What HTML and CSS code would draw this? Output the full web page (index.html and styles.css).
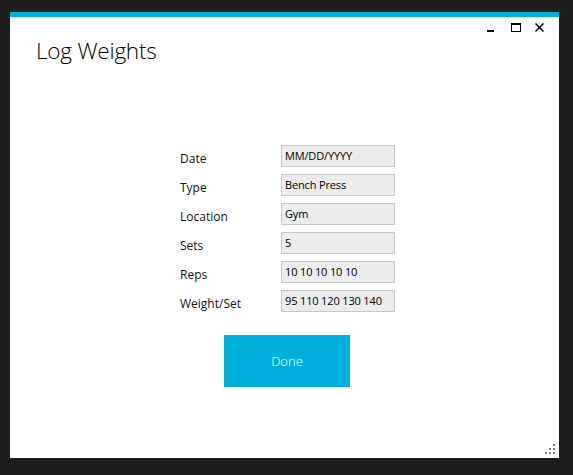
FILE: index.html
```html
<!DOCTYPE html>
<html>
<head>
<meta charset="utf-8">
<link rel="stylesheet" href="styles.css">
</head>
<body>
<div class="window">
  <div class="controls">
    <svg class="ctl" width="10" height="10" viewBox="0 0 10 10"><rect x="0" y="7" width="7" height="2" fill="#000"/></svg>
    <svg class="ctl" width="10" height="10" viewBox="0 0 10 10"><rect x="0.5" y="0.5" width="9" height="8" fill="none" stroke="#000" stroke-width="1"/><rect x="0" y="0" width="10" height="2" fill="#000"/></svg>
    <svg class="ctl" width="10" height="10" viewBox="0 0 10 10"><path d="M0.5 0.5 L8.5 8.5 M8.5 0.5 L0.5 8.5" stroke="#000" stroke-width="1.5" fill="none"/></svg>
  </div>
  <h1 class="title">Log Weights</h1>
  <div class="form">
    <label class="lbl">Date</label><div class="box">MM/DD/YYYY</div>
    <label class="lbl">Type</label><div class="box">Bench Press</div>
    <label class="lbl">Location</label><div class="box">Gym</div>
    <label class="lbl">Sets</label><div class="box">5</div>
    <label class="lbl">Reps</label><div class="box">10 10 10 10 10</div>
    <label class="lbl">Weight/Set</label><div class="box">95 110 120 130 140</div>
  </div>
  <div class="actions"><button class="done">Done</button></div>
  <div class="grip">
    <svg width="10" height="10" viewBox="0 0 10 10" fill="#7a7a7a">
      <rect x="8" y="0" width="2" height="2"/>
      <rect x="4" y="4" width="2" height="2"/><rect x="8" y="4" width="2" height="2"/>
      <rect x="0" y="8" width="2" height="2"/><rect x="4" y="8" width="2" height="2"/><rect x="8" y="8" width="2" height="2"/>
    </svg>
  </div>
</div>
</body>
</html>
```

FILE: styles.css
```css
html, body {
  margin: 0;
  padding: 0;
  background: #1e1e1e;
  height: 475px;
  overflow: hidden;
}
body {
  padding: 12px 0 0 10px;
  box-sizing: border-box;
  font-family: "Open Sans", "Noto Sans", sans-serif;
}
.window {
  width: 549px;
  height: 446px;
  box-sizing: border-box;
  background: #fff;
  border-top: 5px solid #00b0dc;
  display: flex;
  flex-direction: column;
}
.controls {
  display: flex;
  justify-content: flex-end;
  gap: 14px;
  padding: 6px 14px 0 0;
  height: 10px;
}
.ctl { display: block; }
.title {
  margin: 2px 0 0 26px;
  font-size: 22.5px;
  font-weight: 300;
  letter-spacing: -0.2px;
  line-height: 32px;
  color: #000;
}
.form {
  display: grid;
  grid-template-columns: 101px 114px;
  grid-auto-rows: 22px;
  row-gap: 7px;
  margin: 78px 0 0 170px;
}
.lbl {
  font-size: 12px;
  color: #111;
  line-height: 22px;
  padding-top: 3px;
  box-sizing: border-box;
  white-space: nowrap;
}
.box {
  background: #ececec;
  border: 1px solid #c8c8c8;
  font-size: 11px;
  letter-spacing: -0.15px;
  line-height: 16px;
  padding: 2px 0 0 3px;
  color: #000;
  white-space: nowrap;
  overflow: hidden;
}
.actions {
  margin: 23px 0 0 214px;
}
.done {
  width: 126px;
  height: 52px;
  border: 0;
  background: #00b0dc;
  color: #fff;
  font-family: "Open Sans", "Noto Sans", sans-serif;
  font-weight: 300;
  font-size: 13px;
  padding: 0;
}
.grip {
  margin-top: auto;
  align-self: flex-end;
  padding: 0 4px 4px 0;
}
.grip svg { display: block; }
```
